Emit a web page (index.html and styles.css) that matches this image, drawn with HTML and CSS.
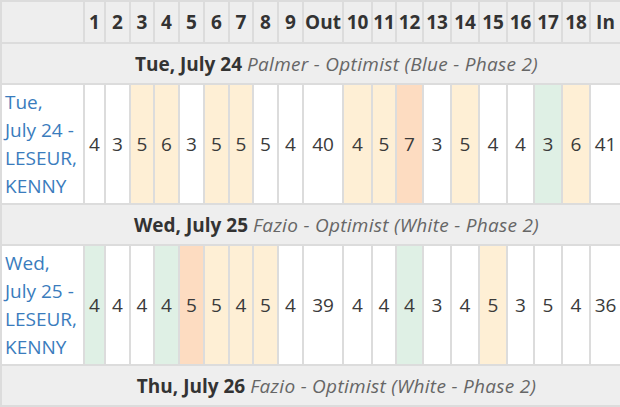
FILE: index.html
```html
<!DOCTYPE html>
<html lang="en">
<head>
<meta charset="utf-8">
<title>Scorecard</title>
<link rel="stylesheet" href="styles.css">
</head>
<body>
<div class="scroller">
<table class="scorecard">
  <colgroup>
    <col class="w-name">
    <col class="w-21"><col class="w-25"><col class="w-24"><col class="w-25"><col class="w-25"><col class="w-25"><col class="w-24"><col class="w-25"><col class="w-25">
    <col class="w-40">
    <col class="w-29"><col class="w-24"><col class="w-27"><col class="w-28"><col class="w-28"><col class="w-28"><col class="w-27"><col class="w-28"><col class="w-28">
    <col class="w-31">
  </colgroup>
  <thead>
    <tr class="holes">
      <th></th>
      <th>1</th><th>2</th><th>3</th><th>4</th><th>5</th><th>6</th><th>7</th><th>8</th><th>9</th>
      <th>Out</th>
      <th>10</th><th>11</th><th>12</th><th>13</th><th>14</th><th>15</th><th>16</th><th>17</th><th>18</th>
      <th>In</th>
    </tr>
  </thead>
  <tbody>
    <tr class="day">
      <td colspan="21"><strong>Tue, July 24</strong> <em>Palmer - Optimist (Blue - Phase 2)</em></td>
    </tr>
    <tr class="round">
      <td class="name"><a href="#">Tue, July 24 - LESEUR, KENNY</a></td>
      <td>4</td><td>3</td><td class="bogey">5</td><td class="bogey">6</td><td>3</td><td class="bogey">5</td><td class="bogey">5</td><td>5</td><td>4</td>
      <td>40</td>
      <td class="bogey">4</td><td class="bogey">5</td><td class="double">7</td><td>3</td><td class="bogey">5</td><td>4</td><td>4</td><td class="birdie">3</td><td class="bogey">6</td>
      <td>41</td>
    </tr>
    <tr class="day">
      <td colspan="21"><strong>Wed, July 25</strong> <em>Fazio - Optimist (White - Phase 2)</em></td>
    </tr>
    <tr class="round">
      <td class="name"><a href="#">Wed, July 25 - LESEUR, KENNY</a></td>
      <td class="birdie">4</td><td>4</td><td>4</td><td class="birdie">4</td><td class="double">5</td><td class="bogey">5</td><td class="bogey">4</td><td class="bogey">5</td><td>4</td>
      <td>39</td>
      <td>4</td><td>4</td><td class="birdie">4</td><td>3</td><td>4</td><td class="bogey">5</td><td>3</td><td>5</td><td>4</td>
      <td>36</td>
    </tr>
    <tr class="day">
      <td colspan="21"><strong>Thu, July 26</strong> <em>Fazio - Optimist (White - Phase 2)</em></td>
    </tr>
  </tbody>
</table>
</div>
</body>
</html>
```

FILE: styles.css
```css
html, body {
  margin: 0;
  padding: 0;
  background: #ffffff;
}

body {
  font-family: "Open Sans", Lato, sans-serif;
  font-size: 19px;
  color: #333333;
  overflow: hidden;
}

.scroller {
  width: 620px;
  overflow: hidden;
}

.scorecard {
  border-collapse: collapse;
  table-layout: fixed;
  width: 620px;
}

.scorecard th,
.scorecard td {
  border: 2px solid #dcdcdc;
  padding: 0;
  text-align: center;
  vertical-align: middle;
  line-height: 28px;
}

.holes th {
  background: #eeeeee;
  font-weight: 700;
  height: 40px;
  color: #333333;
}

.day td {
  background: #eeeeee;
  height: 39px;
  padding-left: 51px;
}

.day strong {
  font-weight: 700;
  color: #333333;
}

.day em {
  font-style: italic;
  color: #666666;
  letter-spacing: 0.3px;
}

.round td {
  background: #ffffff;
  color: #3a3a3a;
}

.round td.name {
  text-align: left;
  padding: 3px 6px 3px 3px;
}

.name a {
  color: #3a7cbd;
  text-decoration: none;
}

.round td.bogey { background: #feefd5; }
.round td.double { background: #fddcc1; }
.round td.birdie { background: #dff0e5; }

.w-name { width: 83px; }
.w-21 { width: 21px; }
.w-24 { width: 24px; }
.w-25 { width: 25px; }
.w-27 { width: 27px; }
.w-28 { width: 28px; }
.w-29 { width: 29px; }
.w-31 { width: 31px; }
.w-40 { width: 40px; }
```
